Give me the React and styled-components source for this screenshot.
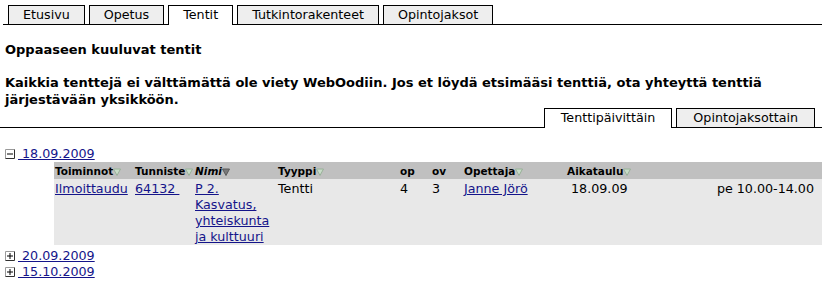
import React from 'react'
import styled, { createGlobalStyle } from 'styled-components'

const GlobalStyle = createGlobalStyle`
  body {
    margin: 0;
    background: #fff;
    font-family: "DejaVu Sans", Verdana, sans-serif;
    font-size: 12.7px;
    color: #000;
  }
`

const Page = styled.div`
  padding: 5px 4px 0 3px;
`

const TabBar = styled.div`
  display: flex;
  gap: 4px;
  padding-left: 5px;
  border-bottom: 1px solid #000;
  justify-content: ${p => (p.$right ? 'flex-end' : 'flex-start')};
  padding-right: ${p => (p.$right ? '7px' : '0')};
  margin-left: ${p => (p.$right ? '-3px' : '0')};
`

const Tab = styled.div`
  height: 18px;
  line-height: 18px;
  padding: 0 ${p => (p.$wide ? '16px' : '14px')};
  border: 1px solid #000;
  border-bottom: none;
  background: ${p => (p.$active ? '#fff' : '#eeeeee')};
  margin-bottom: ${p => (p.$active ? '-1px' : '0')};
  padding-bottom: ${p => (p.$active ? '1px' : '0')};
`

const Heading = styled.h2`
  margin: 17px 0 0 2px;
  font-size: 13px;
  font-weight: bold;
  line-height: 15px;
`

const Note = styled.p`
  margin: 17px 0 0 2px;
  font-size: 13px;
  font-weight: bold;
  line-height: 17px;
`

const SubTabs = styled(TabBar)`
  margin-top: 0;
`

const Groups = styled.div`
  margin-top: 18px;
  padding-left: 2px;
`

const GroupHead = styled.div`
  display: flex;
  align-items: center;
  height: 16px;
  line-height: 16px;
  margin-top: ${p => (p.$gap ? '3px' : '0')};
`

const Link = styled.a`
  color: #14148a;
  text-decoration: underline;
  cursor: pointer;
`

const Table = styled.table`
  margin-left: 49px;
  width: 768px;
  border-collapse: collapse;
  table-layout: fixed;
`

const Th = styled.th`
  background: #c0c0c0;
  text-align: left;
  font-size: 10.5px;
  font-weight: bold;
  font-style: ${p => (p.$italic ? 'italic' : 'normal')};
  height: 17px;
  padding: 0 1px;
  white-space: nowrap;
  vertical-align: middle;
`

const Td = styled.td`
  background: #e8e8e8;
  vertical-align: top;
  padding: 2px 1px 0 1px;
  line-height: 16px;
  text-align: ${p => (p.$right ? 'right' : 'left')};
  padding-right: ${p => (p.$right ? '8px' : '1px')};
`

const Arrow = ({ active }) => (
  <svg width="8" height="8" viewBox="0 0 8 8" style={{ verticalAlign: '-1px' }}>
    <polygon
      points="0.5,1 7.5,1 4,7.5"
      fill={active ? '#7a7a7a' : '#c8dcc8'}
      stroke={active ? '#5a5a5a' : '#98b098'}
      strokeWidth="1"
    />
  </svg>
)

const Toggle = ({ open }) => (
  <svg width="10" height="10" viewBox="0 0 10 10" style={{ marginRight: '3px' }}>
    <path d="M0.5 9.5 V0.5 H9.5" fill="none" stroke="#9a9a9a" />
    <path d="M0.5 9.5 H9.5 V0.5" fill="none" stroke="#303030" />
    <path d="M2 5 H8" stroke="#000" />
    {!open && <path d="M5 2 V8" stroke="#000" />}
  </svg>
)

const tabs = ['Etusivu', 'Opetus', 'Tentit', 'Tutkintorakenteet', 'Opintojaksot']

export default function App() {
  return (
    <Page>
      <GlobalStyle />
      <TabBar>
        {tabs.map(t => (
          <Tab key={t} $active={t === 'Tentit'}>{t}</Tab>
        ))}
      </TabBar>
      <Heading>Oppaaseen kuuluvat tentit</Heading>
      <Note>
        Kaikkia tenttejä ei välttämättä ole viety WebOodiin. Jos et löydä etsimääsi tenttiä, ota yhteyttä tenttiä
        järjestävään yksikköön.
      </Note>
      <SubTabs $right>
        <Tab $active $wide>Tenttipäivittäin</Tab>
        <Tab $wide>Opintojaksottain</Tab>
      </SubTabs>
      <Groups>
        <GroupHead>
          <Toggle open />
          <Link>&nbsp;18.09.2009</Link>
        </GroupHead>
        <Table>
          <colgroup>
            <col style={{ width: 80 }} />
            <col style={{ width: 60 }} />
            <col style={{ width: 83 }} />
            <col style={{ width: 122 }} />
            <col style={{ width: 32 }} />
            <col style={{ width: 32 }} />
            <col style={{ width: 103 }} />
            <col style={{ width: 100 }} />
            <col />
          </colgroup>
          <thead>
            <tr>
              <Th>Toiminnot<Arrow /></Th>
              <Th>Tunniste<Arrow /></Th>
              <Th $italic>Nimi<Arrow active /></Th>
              <Th>Tyyppi<Arrow /></Th>
              <Th>op</Th>
              <Th>ov</Th>
              <Th>Opettaja<Arrow /></Th>
              <Th>Aikataulu<Arrow /></Th>
              <Th />
            </tr>
          </thead>
          <tbody>
            <tr>
              <Td><Link>Ilmoittaudu</Link></Td>
              <Td><Link>64132&nbsp;</Link></Td>
              <Td><Link>P 2. Kasvatus, yhteiskunta ja kulttuuri</Link></Td>
              <Td>Tentti</Td>
              <Td>4</Td>
              <Td>3</Td>
              <Td><Link>Janne Jörö</Link></Td>
              <Td>&nbsp;18.09.09</Td>
              <Td $right>pe 10.00-14.00</Td>
            </tr>
          </tbody>
        </Table>
        <GroupHead $gap>
          <Toggle />
          <Link>&nbsp;20.09.2009</Link>
        </GroupHead>
        <GroupHead>
          <Toggle />
          <Link>&nbsp;15.10.2009</Link>
        </GroupHead>
      </Groups>
    </Page>
  )
}
